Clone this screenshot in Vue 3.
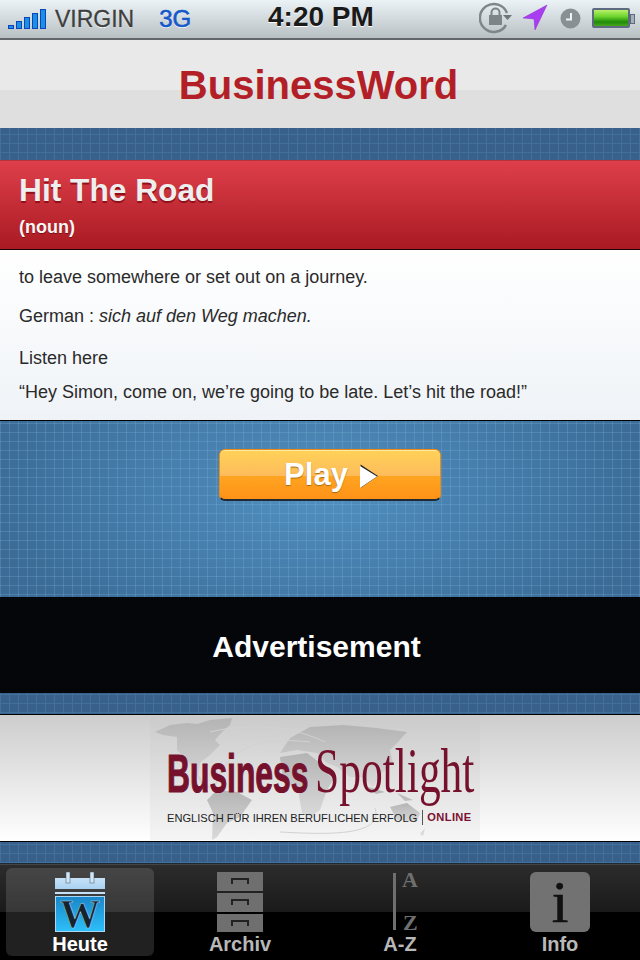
<script setup>
const tabs = [
  { key: 'heute', label: 'Heute' },
  { key: 'archiv', label: 'Archiv' },
  { key: 'az', label: 'A-Z' },
  { key: 'info', label: 'Info' },
]
const drawers = [0, 21, 42]
</script>

<template>
  <div class="phone">
    <div class="status">
      <svg class="signal" width="40" height="22" viewBox="0 0 40 22">
        <g fill="#1a8fe8" stroke="#0b45b8" stroke-width="1">
          <rect x="0.5" y="16.5" width="5" height="3" />
          <rect x="8.5" y="12.5" width="5" height="7" />
          <rect x="16.5" y="8.5" width="5" height="11" />
          <rect x="24.5" y="4.5" width="5" height="15" />
          <rect x="32.5" y="0.5" width="5" height="19" />
        </g>
      </svg>
      <span class="carrier">VIRGIN</span>
      <span class="net">3G</span>
      <span class="clock">4:20 PM</span>
      <svg class="st-lock" width="34" height="32" viewBox="0 0 34 32">
        <path d="M27 23A14 14 0 1 1 28 11" fill="none" stroke="#7d8689" stroke-width="2.5" />
        <path d="M24 13h9l-4.500 5z" fill="#6d7679" />
        <rect x="10" y="13" width="13" height="10" fill="#7c8588" />
        <path d="M12.500 13v-2.500a4 4 0 0 1 8 0V13" fill="none" stroke="#7c8588" stroke-width="2" />
      </svg>
      <svg class="st-arrow" width="26" height="27" viewBox="0 0 26 27">
        <path d="M25 1L1 14l11 1 1 11z" fill="#a93ef0" stroke="#8c2bd6" stroke-width="0.5" />
      </svg>
      <svg class="st-clock" width="21" height="21" viewBox="0 0 21 21">
        <circle cx="10.500" cy="10.500" r="10" fill="#879193" />
        <path d="M11 5v6.500H6" fill="none" stroke="#f2f4f4" stroke-width="2" />
      </svg>
      <div class="battery"><div class="battery-fill"></div></div>
    </div>

    <header class="brand"><span>BusinessWord</span></header>

    <div class="grid gap-32"></div>

    <section class="word">
      <h1>Hit The Road</h1>
      <p>(noun)</p>
    </section>

    <section class="definition">
      <p class="l1">to leave somewhere or set out on a journey.</p>
      <p class="l2">German : <em>sich auf den Weg machen.</em></p>
      <p class="l3">Listen here</p>
      <p class="l4">“Hey Simon, come on, we’re going to be late. Let’s hit the road!”</p>
    </section>

    <section class="grid player">
      <button class="play">
        <span>Play</span>
        <svg width="20" height="25" viewBox="0 0 20 25">
          <path d="M1.500 0.500L19 12 1.500 24z" fill="#222" />
          <path d="M1 2L18 12.500 1 24z" fill="#fff" />
        </svg>
      </button>
    </section>

    <section class="ad"><span>Advertisement</span></section>

    <div class="grid gap-21"></div>

    <section class="banner">
      <div class="banner-img">
        <svg class="map" width="330" height="124" viewBox="0 0 330 124">
          <defs>
            <linearGradient id="mapFill" x1="0" y1="0" x2="0" y2="1">
              <stop offset="0" stop-color="#b4b4b4" /><stop offset="1" stop-color="#dadada" />
            </linearGradient>
          </defs>
          <g fill="url(#mapFill)">
            <path d="M5 16L20 9 37 7 47 8 60 4 82 2 80 9 72 16 65 24 70 29 60 39 50 47 48 59 63 74 52 70 43 51 27 34 27 21 13 19z" />
            <path d="M67 74L87 76 102 84 90 101 77 107 67 121 62 124 63 97 57 84z" />
            <path d="M130 37L140 22 160 11 193 9 227 12 257 16 247 27 240 34 243 47 233 56 223 71 213 61 200 61 187 51 177 47 167 37 147 34z" />
            <path d="M130 41L157 37 170 47 183 64 177 74 170 94 160 101 152 97 148 74 133 64z" />
            <path d="M240 91L257 87 270 97 267 106 247 104z" />
            <path d="M247 77L263 84 255 85zM215 70L235 76 226 78zM270 118L275 112 273 120z" />
          </g>
          <g fill="none" stroke="#d2d2d2" stroke-width="1">
            <path d="M60 16C110 4 150 14 175 26" />
            <path d="M65 70C80 24 120 22 160 26" />
            <path d="M225 92C235 122 170 118 130 116" />
          </g>
        </svg>
        <div class="logo">
          <span class="logo-b">Business</span><span class="logo-s">Spotlight</span>
        </div>
        <div class="tagline">
          <span class="tag-de">ENGLISCH FÜR IHREN BERUFLICHEN ERFOLG</span>
          <span class="tag-on">ONLINE</span>
        </div>
      </div>
    </section>

    <div class="grid gap-21b"></div>

    <nav class="tabbar">
      <div v-for="tab in tabs" :key="tab.key" class="tab" :class="{ active: tab.key === 'heute' }">
        <div class="tab-icon">
          <svg v-if="tab.key === 'heute'" class="cal" width="50" height="76" viewBox="0 -6 50 76">
            <defs>
              <linearGradient id="calTop" x1="0" y1="0" x2="0" y2="1">
                <stop offset="0" stop-color="#c6e2f8" /><stop offset="1" stop-color="#a9d2f2" />
              </linearGradient>
              <linearGradient id="calBody" x1="0" y1="0" x2="0" y2="1">
                <stop offset="0" stop-color="#1a86c8" /><stop offset="1" stop-color="#2cc0fa" />
              </linearGradient>
            </defs>
            <rect x="0" y="6" width="50" height="11" fill="url(#calTop)" />
            <rect x="11" y="0" width="4" height="11" fill="#cfe6f8" stroke="#46525c" stroke-width="0.5" />
            <rect x="35" y="0" width="4" height="11" fill="#cfe6f8" stroke="#46525c" stroke-width="0.5" />
            <rect x="0" y="20" width="50" height="2" fill="#c6e2f8" />
            <rect x="0.500" y="24.500" width="49" height="35" fill="url(#calBody)" stroke="#a9d8f5" />
            <text x="25" y="55" text-anchor="middle" class="cal-w">W</text>
          </svg>
          <svg v-else-if="tab.key === 'archiv'" width="46" height="60" viewBox="0 0 46 60">
            <g v-for="y in drawers" :key="y" :transform="`translate(0 ${y})`">
              <rect width="46" height="19" fill="#6f6f6f" />
              <path d="M15 12V7h16v5" fill="none" stroke="#222" stroke-width="2" />
            </g>
          </svg>
          <svg v-else-if="tab.key === 'az'" class="az" width="28" height="76" viewBox="0 -6 28 76">
            <rect x="1" y="1" width="3" height="57" fill="#6f6f6f" />
            <text x="10" y="15" class="az-l">A</text>
            <text x="11" y="58" class="az-l">Z</text>
          </svg>
          <div v-else class="info-box"><span>i</span></div>
        </div>
        <span class="tab-label">{{ tab.label }}</span>
      </div>
    </nav>
  </div>
</template>

<style scoped>
.phone {
  width: 640px;
  height: 960px;
  overflow: hidden;
  display: flex;
  flex-direction: column;
  font-family: "Liberation Sans", Arial, sans-serif;
}
.status {
  height: 38px;
  border-bottom: 2px solid #63676b;
  background: linear-gradient(#ecf3f7, #b8c0c4);
  display: flex;
  align-items: center;
  position: relative;
  flex: none;
}
.signal { margin-left: 8px; margin-top: 2px; }
.carrier {
  margin-left: 7px;
  font-size: 23px;
  color: #3e3e3e;
  text-shadow: 0 1px 0 #fff;
  -webkit-text-stroke: 0.3px #3e3e3e;
}
.net {
  margin-left: 25px;
  font-size: 24px;
  color: #1558c8;
  text-shadow: 0 1px 0 #fff;
  -webkit-text-stroke: 0.6px #1558c8;
}
.clock {
  position: absolute;
  left: 268px;
  top: 1px;
  font-size: 28px;
  font-weight: bold;
  color: #1a1a1a;
  text-shadow: 0 1px 0 #fff;
}
.st-lock { position: absolute; left: 479px; top: 2px; }
.st-arrow { position: absolute; left: 522px; top: 4px; }
.st-clock { position: absolute; left: 560px; top: 8px; }
.battery {
  position: absolute;
  left: 592px;
  top: 8px;
  width: 38px;
  height: 20px;
  box-sizing: border-box;
  border: 2px solid #5d6a80;
  border-radius: 2px;
  background: #b4c0c4;
}
.battery::after {
  content: "";
  position: absolute;
  left: 36px;
  top: 4px;
  width: 3px;
  height: 8px;
  border: 1px solid #5d6a80;
  background: #a6b1b5;
}
.battery-fill {
  height: 100%;
  background: linear-gradient(#b8f06a, #6fd62e 40%, #1f8a0a 75%, #4aa81c);
}
.brand {
  height: 88px;
  flex: none;
  background: linear-gradient(#e9e9e9 0 50px, #dfdfdf 50px);
  display: flex;
  align-items: center;
  justify-content: center;
  padding: 3px 3px 0 0;
  box-sizing: border-box;
  font-size: 40px;
  font-weight: bold;
  color: #b31f27;
}
.grid {
  flex: none;
  background-color: #38608a;
  background-image:
    linear-gradient(to right, #43709a 1px, transparent 1px),
    linear-gradient(to bottom, #43709a 1px, transparent 1px);
  background-size: 9px 9px;
}
.gap-32 { height: 32px; background-position: 0 6px; }
.gap-21 { height: 21px; background-position: 0 1px; }
.gap-21b { height: 21px; background-position: 0 2px; }
.word {
  height: 88px;
  flex: none;
  border-top: 1px solid #b8323c;
  border-bottom: 1px solid #1a0508;
  background: linear-gradient(#de3f4a, #a91a22);
  padding-left: 19px;
  position: relative;
}
.word h1 {
  margin: 0;
  padding-top: 11px;
  font-size: 31.700px;
  line-height: 37px;
  font-weight: bold;
  color: #eee;
  text-shadow: 0 2px 0 #8f1018;
}
.word p {
  margin: 0;
  padding-top: 8px;
  font-size: 18px;
  line-height: 20px;
  font-weight: bold;
  color: #f6f6f6;
  text-shadow: 0 1px 0 #7c0d13;
}
.definition {
  height: 170px;
  flex: none;
  border-bottom: 1px solid #000;
  background: linear-gradient(#fff, #eff3f7);
  padding-left: 19px;
  font-size: 18px;
  line-height: 22px;
  color: #2a2a2a;
  display: flex;
  flex-direction: column;
}
.definition p { margin: 0; }
.l1 { padding-top: 16px; }
.l2 { padding-top: 17px; }
.l3 { padding-top: 20px; }
.l4 { padding-top: 12px; }
.player {
  height: 176px;
  background-image:
    linear-gradient(to right, rgba(130, 190, 225, 0.24) 1px, transparent 1px),
    linear-gradient(to bottom, rgba(130, 190, 225, 0.24) 1px, transparent 1px),
    radial-gradient(ellipse 340px 170px at 50% 40%, #5190c1, #3b6b96 100%);
  background-size: 9px 9px, 9px 9px, 100% 100%;
  background-position: 0 2px, 0 2px, 0 0;
  background-color: #3b6b96;
  display: flex;
  justify-content: center;
  padding: 28px 0 0 20px;
  box-sizing: border-box;
}
.play {
  width: 222px;
  height: 52px;
  padding: 0 2px 0 0;
  border: 1px solid #ef8a10;
  border-bottom: 2px solid #1f2a33;
  border-radius: 6px;
  box-shadow: inset 0 1px 0 #ffe9a8;
  background: linear-gradient(#ffd257, #fdbb5c 54%, #ffa420 54%, #ff9218);
  display: flex;
  align-items: center;
  justify-content: center;
  gap: 11px;
  font-family: inherit;
  font-size: 31px;
  font-weight: bold;
  color: #fff;
  text-shadow: 0 1px 1px #a66a10;
}
.play svg { margin-top: 3px; margin-right: -5px; }
.ad {
  height: 96px;
  flex: none;
  background: #050609;
  display: flex;
  align-items: center;
  justify-content: center;
  padding: 3px 7px 0 0;
  box-sizing: border-box;
  font-size: 30px;
  font-weight: bold;
  color: #fff;
}
.banner {
  height: 126px;
  flex: none;
  border-top: 1px solid #000;
  border-bottom: 1px solid #000;
  background: linear-gradient(#cdcdcd, #fff);
  display: flex;
  justify-content: center;
  padding-right: 10px;
}
.banner-img {
  width: 330px;
  height: 124px;
  margin-top: 1px;
  position: relative;
  background: linear-gradient(#cbcbcb, #f5f5f5);
  display: flex;
  flex-direction: column;
  box-sizing: border-box;
  padding: 30px 0 0 17px;
}
.map { position: absolute; left: 0; top: 0; }
.logo {
  position: relative;
  height: 56px;
  white-space: nowrap;
  display: flex;
  align-items: baseline;
  color: #76112d;
}
.logo-b {
  display: inline-block;
  width: 148px;
  font-family: "Liberation Sans", Arial, sans-serif;
  font-size: 53px;
  line-height: 50px;
  font-weight: bold;
  transform: scaleX(0.6);
  transform-origin: 0 50%;
  -webkit-text-stroke: 1.2px #76112d;
}
.logo-s {
  display: inline-block;
  font-family: "Liberation Serif", "Times New Roman", serif;
  font-size: 63px;
  line-height: 50px;
  transform: scaleX(0.69);
  transform-origin: 0 50%;
}
.tagline {
  position: relative;
  margin-top: 8px;
  display: flex;
  align-items: center;
  white-space: nowrap;
  font-size: 11.100px;
  color: #222;
}
.tag-on {
  margin-left: 5px;
  padding-left: 4px;
  border-left: 1px solid #555;
  font-weight: bold;
  color: #7b1230;
  line-height: 15px;
  letter-spacing: 0.4px;
}
.tabbar {
  flex: 1;
  background: linear-gradient(#444 0 1px, #2c2c2c 1px, #1a1a1a 48px, #000 48px);
  display: grid;
  grid-template-columns: repeat(4, 160px);
  border-top: 1px solid #1d2a36;
}
.tab {
  display: flex;
  flex-direction: column;
  align-items: center;
  padding-top: 8px;
  box-sizing: border-box;
  position: relative;
}
.tab.active::before {
  content: "";
  position: absolute;
  left: 6px;
  top: 4px;
  width: 148px;
  height: 88px;
  border-radius: 6px;
  background: rgba(255, 255, 255, 0.13);
}
.tab-icon {
  position: relative;
  height: 60px;
  display: flex;
  align-items: flex-start;
  justify-content: center;
}
.cal { margin-top: -6px; overflow: visible; }
.az { margin: -6px 0 0 12px; overflow: visible; }
.tab-label {
  position: relative;
  font-size: 20px;
  line-height: 24px;
  font-weight: bold;
  color: #b8b8b8;
}
.active .tab-label { color: #fff; }
.cal-w {
  font-family: "Liberation Serif", serif;
  font-size: 40px;
  font-weight: bold;
  fill: #17232c;
  stroke: #a8dcf6;
  stroke-width: 0.5px;
}
.az-l {
  font-family: "Liberation Serif", serif;
  font-size: 22px;
  font-weight: bold;
  fill: #6f6f6f;
}
.info-box {
  width: 60px;
  height: 60px;
  border-radius: 6px;
  background: #727272;
  display: flex;
  align-items: center;
  justify-content: center;
  font-family: "Liberation Serif", serif;
  font-size: 60px;
  line-height: 60px;
  font-weight: normal;
  color: #111;
  -webkit-text-stroke: 0.6px #111;
}
</style>

<style>
body { margin: 0; background: #000; }
</style>
